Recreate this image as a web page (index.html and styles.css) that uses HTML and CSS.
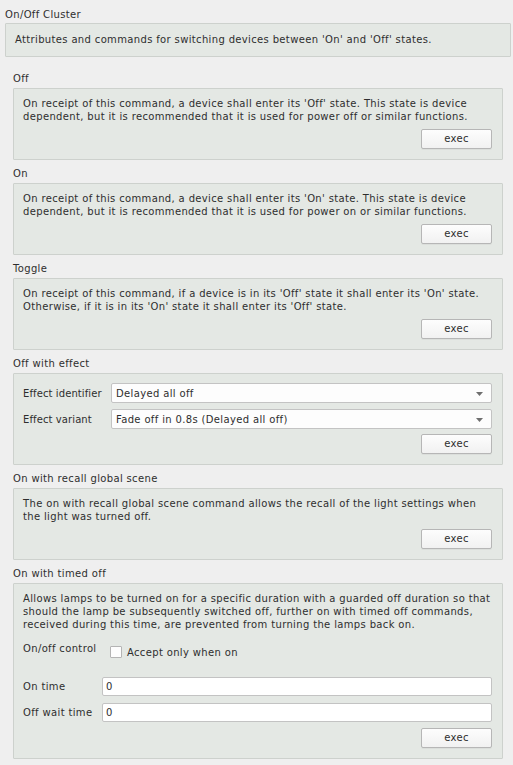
FILE: index.html
```html
<!DOCTYPE html>
<html>
<head>
<meta charset="utf-8">
<title>On/Off Cluster</title>
<link rel="stylesheet" href="styles.css">
</head>
<body>
<div class="page">
  <div class="cluster-title">On/Off Cluster</div>
  <div class="box cluster-desc">Attributes and commands for switching devices between 'On' and 'Off' states.</div>

  <div class="commands">
    <section class="cmd">
      <div class="cmd-title">Off</div>
      <div class="box">
        <p class="desc">On receipt of this command, a device shall enter its 'Off' state. This state is device<br>dependent, but it is recommended that it is used for power off or similar functions.</p>
        <div class="actions"><button class="exec">exec</button></div>
      </div>
    </section>

    <section class="cmd">
      <div class="cmd-title">On</div>
      <div class="box">
        <p class="desc">On receipt of this command, a device shall enter its 'On' state. This state is device<br>dependent, but it is recommended that it is used for power on or similar functions.</p>
        <div class="actions"><button class="exec">exec</button></div>
      </div>
    </section>

    <section class="cmd">
      <div class="cmd-title">Toggle</div>
      <div class="box">
        <p class="desc">On receipt of this command, if a device is in its 'Off' state it shall enter its 'On' state.<br>Otherwise, if it is in its 'On' state it shall enter its 'Off' state.</p>
        <div class="actions"><button class="exec">exec</button></div>
      </div>
    </section>

    <section class="cmd">
      <div class="cmd-title">Off with effect</div>
      <div class="box">
        <div class="form form-effect">
          <label class="form-label">Effect identifier</label>
          <div class="combo"><span class="combo-text">Delayed all off</span><svg class="combo-arrow" width="7" height="4" viewBox="0 0 7 4"><path d="M0 0H7L3.5 4Z" fill="#6f6f6f"/></svg></div>
          <label class="form-label">Effect variant</label>
          <div class="combo"><span class="combo-text">Fade off in 0.8s (Delayed all off)</span><svg class="combo-arrow" width="7" height="4" viewBox="0 0 7 4"><path d="M0 0H7L3.5 4Z" fill="#6f6f6f"/></svg></div>
        </div>
        <div class="actions actions-tight"><button class="exec">exec</button></div>
      </div>
    </section>

    <section class="cmd">
      <div class="cmd-title">On with recall global scene</div>
      <div class="box">
        <p class="desc">The on with recall global scene command allows the recall of the light settings when<br>the light was turned off.</p>
        <div class="actions"><button class="exec">exec</button></div>
      </div>
    </section>

    <section class="cmd">
      <div class="cmd-title">On with timed off</div>
      <div class="box">
        <p class="desc">Allows lamps to be turned on for a specific duration with a guarded off duration so that<br>should the lamp be subsequently switched off, further on with timed off commands,<br>received during this time, are prevented from turning the lamps back on.</p>
        <div class="form form-timed">
          <label class="form-label">On/off control</label>
          <div class="check-field">
            <label class="check"><input type="checkbox" class="check-box"><span>Accept only when on</span></label>
          </div>
          <label class="form-label">On time</label>
          <input class="line-edit" type="text" value="0">
          <label class="form-label">Off wait time</label>
          <input class="line-edit" type="text" value="0">
        </div>
        <div class="actions"><button class="exec">exec</button></div>
      </div>
    </section>
  </div>
</div>
</body>
</html>
```

FILE: styles.css
```css
html, body {
  margin: 0;
  padding: 0;
}

body {
  background: #efefef;
  color: #2e2e2e;
  font-family: "DejaVu Sans", sans-serif;
  font-size: 10px;
  line-height: 13px;
  letter-spacing: 0.35px;
}

.page {
  padding: 8px 2px 0 5px;
}

.cluster-title {
  height: 13px;
  margin-bottom: 2px;
}

.box {
  background: #e4e8e4;
  border: 1px solid #cdd1cd;
  border-radius: 1px;
}

.cluster-desc {
  padding: 9px 9px 10px 9px;
}

.commands {
  padding: 0 8px;
  margin-top: 15px;
}

.cmd + .cmd {
  margin-top: 7px;
}

.cmd-title {
  height: 13px;
  margin-bottom: 3px;
}

.cmd .box {
  padding: 8px 10px 10px 9px;
}

.desc {
  margin: 0;
  white-space: nowrap;
}

.actions {
  display: flex;
  justify-content: flex-end;
  margin-top: 6px;
}

.actions-tight {
  margin-top: 5px;
}

.exec {
  width: 71px;
  height: 20px;
  margin: 0;
  padding: 0;
  border: 1px solid #b6b6b6;
  border-radius: 2px;
  background: linear-gradient(#fdfdfd, #f1f1f1);
  box-shadow: 0 1px 0 rgba(0, 0, 0, 0.04);
  color: #2e2e2e;
  font-family: "DejaVu Sans", sans-serif;
  font-size: 10px;
  letter-spacing: 0.35px;
  line-height: 18px;
}

.form {
  display: grid;
  align-items: center;
}

.form-effect {
  grid-template-columns: 88px 1fr;
  row-gap: 6px;
  margin-top: 1px;
}

.form-effect .form-label {
  letter-spacing: 0.1px;
}

.form-timed {
  grid-template-columns: 79px 1fr;
  row-gap: 7px;
  margin-top: 11px;
}

.form-timed .check-field {
  margin-bottom: -1px;
}

.form-label {
  white-space: nowrap;
}

.form-timed .form-label:first-child {
  align-self: start;
}

.combo {
  height: 20px;
  box-sizing: border-box;
  display: flex;
  align-items: center;
  justify-content: space-between;
  padding: 0 8px 0 4px;
  background: #fdfdfd;
  border: 1px solid #c3c3c3;
  border-radius: 2px;
}

.combo-arrow {
  display: block;
  margin-top: 1px;
}

.check-field {
  height: 29px;
  box-sizing: border-box;
  padding: 4px 0 0 8px;
}

.check {
  display: flex;
  align-items: center;
  gap: 5px;
  height: 12px;
}

.check-box {
  appearance: none;
  -webkit-appearance: none;
  width: 12px;
  height: 12px;
  margin: 0;
  box-sizing: border-box;
  border: 1px solid #b4b4b4;
  border-radius: 1px;
  background: #fdfdfd;
}

.line-edit {
  height: 19px;
  box-sizing: border-box;
  width: 100%;
  margin: 0;
  padding: 0 3px;
  border: 1px solid #c3c3c3;
  border-radius: 2px;
  background: #ffffff;
  color: #2e2e2e;
  font-family: "DejaVu Sans", sans-serif;
  font-size: 10px;
}
```
